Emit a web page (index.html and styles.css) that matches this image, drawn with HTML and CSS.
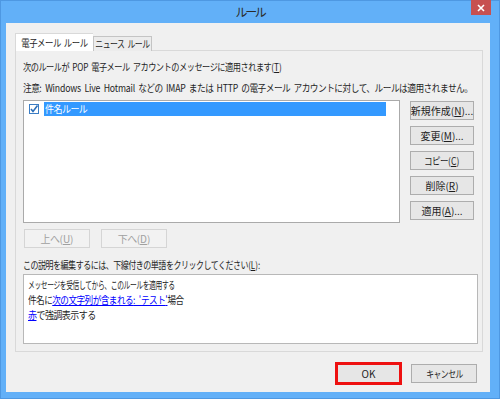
FILE: index.html
```html
<!DOCTYPE html>
<html lang="ja">
<head>
<meta charset="utf-8">
<title>ルール</title>
<link rel="stylesheet" href="styles.css">
</head>
<body>
<div class="window">
  <div class="titlebar">
    <div class="title">ルール</div>
    <div class="close">
      <svg width="8" height="8" viewBox="0 0 8 8"><path d="M1 1 L7 7 M7 1 L1 7" stroke="#fff" stroke-width="1.6"/></svg>
    </div>
  </div>
  <div class="client">
    <div class="tabs">
      <div class="tab tab-active"><span class="t sx-tab1">電子メール ルール</span></div>
      <div class="tab"><span class="t sx-tab2">ニュース ルール</span></div>
    </div>
    <div class="panel">
      <div class="txt line1">次のルールが <span class="en">POP</span> 電子メール アカウントのメッセージに適用されます<span class="mn">(<u>T</u>)</span></div>
      <div class="txt line2">注意<span class="en">: Windows Live Hotmail</span> などの <span class="en">IMAP</span> または <span class="en">HTTP</span> の電子メール アカウントに対して、ルールは適用されません。</div>
      <div class="rules-row">
        <div class="listbox">
          <div class="item">
            <span class="check">
              <svg width="10" height="10" viewBox="0 0 10 10"><rect x="0.5" y="0.5" width="9" height="9" fill="#fff" stroke="#3b7dc4"/><path d="M2 5 L4 7.5 L8.5 1.5" fill="none" stroke="#2d6fb8" stroke-width="1.6"/></svg>
            </span>
            <span class="item-label"><span class="t sx-item">件名ルール</span></span>
          </div>
        </div>
        <div class="side-buttons">
          <div class="btn">新規作成<span class="mn">(<u>N</u>)...</span></div>
          <div class="btn">変更<span class="mn">(<u>M</u>)...</span></div>
          <div class="btn"><span class="t sx-copy">コピー<span class="mn">(<u>C</u>)</span></span></div>
          <div class="btn">削除<span class="mn">(<u>R</u>)</span></div>
          <div class="btn">適用<span class="mn">(<u>A</u>)...</span></div>
        </div>
      </div>
      <div class="move-row">
        <div class="btn btn-disabled">上へ<span class="mn">(<u>U</u>)</span></div>
        <div class="btn btn-disabled">下へ<span class="mn">(<u>D</u>)</span></div>
      </div>
      <div class="txt desc-label">この説明を編集するには、下線付きの単語をクリックしてください<span class="mn">(<u>L</u>):</span></div>
      <div class="desc">
        <div class="txt d1">メッセージを受信してから、このルールを適用する</div>
        <div class="txt d2">件名に<span class="link">次の文字列が含まれる<span class="en">: '</span>テスト<span class="en">'</span></span>場合</div>
        <div class="txt d3"><span class="link">赤</span>で強調表示する</div>
      </div>
    </div>
    <div class="footer">
      <div class="btn btn-ok">OK</div>
      <div class="btn btn-cancel"><span class="t sx-cancel">キャンセル</span></div>
    </div>
  </div>
</div>
</body>
</html>
```
FILE: styles.css
```css
* { box-sizing: border-box; }
html, body { margin: 0; padding: 0; }
body {
  width: 500px;
  height: 399px;
  overflow: hidden;
  background: #62b0f8;
  font-family: "Noto Sans CJK JP", "Noto Sans", sans-serif;
  font-size: 10px;
  color: #1e1e1e;
}
.window {
  width: 500px;
  height: 399px;
  display: flex;
  flex-direction: column;
  box-shadow: inset 0 0 0 1px #4e98e2;
}
.titlebar {
  height: 23px;
  display: flex;
  justify-content: center;
  align-items: center;
  position: relative;
}
.title {
  font-size: 12px;
  letter-spacing: -2.3px;
  color: #2a2a2a;
  margin-top: -1px;
}
.close {
  position: absolute;
  top: 0;
  left: 471px;
  width: 20px;
  height: 15px;
  background: #c75050;
  display: flex;
  align-items: center;
  justify-content: center;
}
.client {
  margin: 0 10px 0 6px;
  height: 369px;
  background: #f0f0f0;
  padding: 10px 7px 0 9px;
  display: flex;
  flex-direction: column;
}

/* condensed text helpers */
.t {
  display: inline-block;
  letter-spacing: -0.6px;
  word-spacing: 2px;
  transform-origin: center center;
}
.txt {
  letter-spacing: -0.6px;
  word-spacing: 2px;
  transform-origin: left center;
  white-space: nowrap;
}
.en { letter-spacing: -0.2px; }
.mn { letter-spacing: 0; }
.sx-tab1 { transform: scaleX(0.84); }
.sx-tab2 { transform: scaleX(0.79); }
.sx-item { transform: scaleX(0.9); transform-origin: left center; }
.sx-copy { transform: scaleX(0.85); }
.sx-cancel { transform: scaleX(0.78); }
.line1 { transform: scaleX(0.82); }
.line2 { transform: scaleX(0.87); }
.desc-label { transform: scaleX(0.8); }
.d1 { transform: scaleX(0.68); }
.d2 { transform: scaleX(0.86); }
.d3 { transform: scaleX(0.9); }

.tabs {
  display: flex;
  align-items: flex-end;
  height: 18px;
  position: relative;
  z-index: 1;
  margin-bottom: -1px;
}
.tab {
  height: 15px;
  border: 1px solid #c4c4c4;
  border-bottom: none;
  background: #ececec;
  line-height: 14px;
  white-space: nowrap;
  width: 59px;
  display: flex;
  justify-content: center;
  overflow: hidden;
}
.tab-active {
  height: 18px;
  width: 78px;
  background: #fff;
  border-color: #d9d9d9;
  line-height: 17px;
  border-right: none;
}
.panel {
  height: 302px;
  border: 1px solid #d9d9d9;
  background: #f0f0f0;
  padding: 8px 4px 0 7px;
  display: flex;
  flex-direction: column;
}
.line1, .line2, .desc-label {
  line-height: 16px;
  height: 16px;
}
.line2 { margin-top: 5px; }
.rules-row {
  margin-top: 4px;
  display: flex;
  gap: 10px;
  height: 123px;
}
.listbox {
  width: 377px;
  height: 123px;
  background: #fff;
  border: 1px solid #aaaaaa;
  padding: 1px 13px 0 5px;
}
.item {
  display: flex;
  align-items: center;
  height: 14px;
}
.check {
  width: 14px;
  height: 14px;
  display: flex;
  align-items: center;
}
.item-label {
  flex: 1;
  height: 14px;
  background: #3399ff;
  color: #fff;
  line-height: 14px;
  padding-left: 1px;
  margin-left: 1px;
}
.side-buttons {
  display: flex;
  flex-direction: column;
  gap: 6px;
  padding-top: 1px;
}
.btn {
  width: 64px;
  height: 19px;
  border: 1px solid #adadad;
  background: #e6e6e6;
  display: flex;
  align-items: center;
  justify-content: center;
  line-height: 17px;
  white-space: nowrap;
}
.move-row {
  display: flex;
  gap: 11px;
  margin-top: 6px;
  padding-left: 1px;
}
.btn-disabled {
  width: 66px;
  color: #a0a0a0;
  border-color: #d5d5d5;
  background: #f2f2f2;
  letter-spacing: -0.5px;
}
.desc-label {
  margin-top: 9px;
}
.desc {
  margin-top: 1px;
  height: 70px;
  background: #fff;
  border: 1px solid #b8b8b8;
  padding: 2px 0 0 4px;
  line-height: 15px;
}
.link {
  color: #0000ff;
  text-decoration: underline;
}
.footer {
  display: flex;
  justify-content: flex-end;
  align-items: center;
  gap: 9px;
  padding: 10px 6px 0 0;
}
.btn-ok {
  width: 67px;
  height: 23px;
  border: 3px solid #ee1111;
}
.btn-cancel {
  width: 66px;
  height: 19px;
}
```
